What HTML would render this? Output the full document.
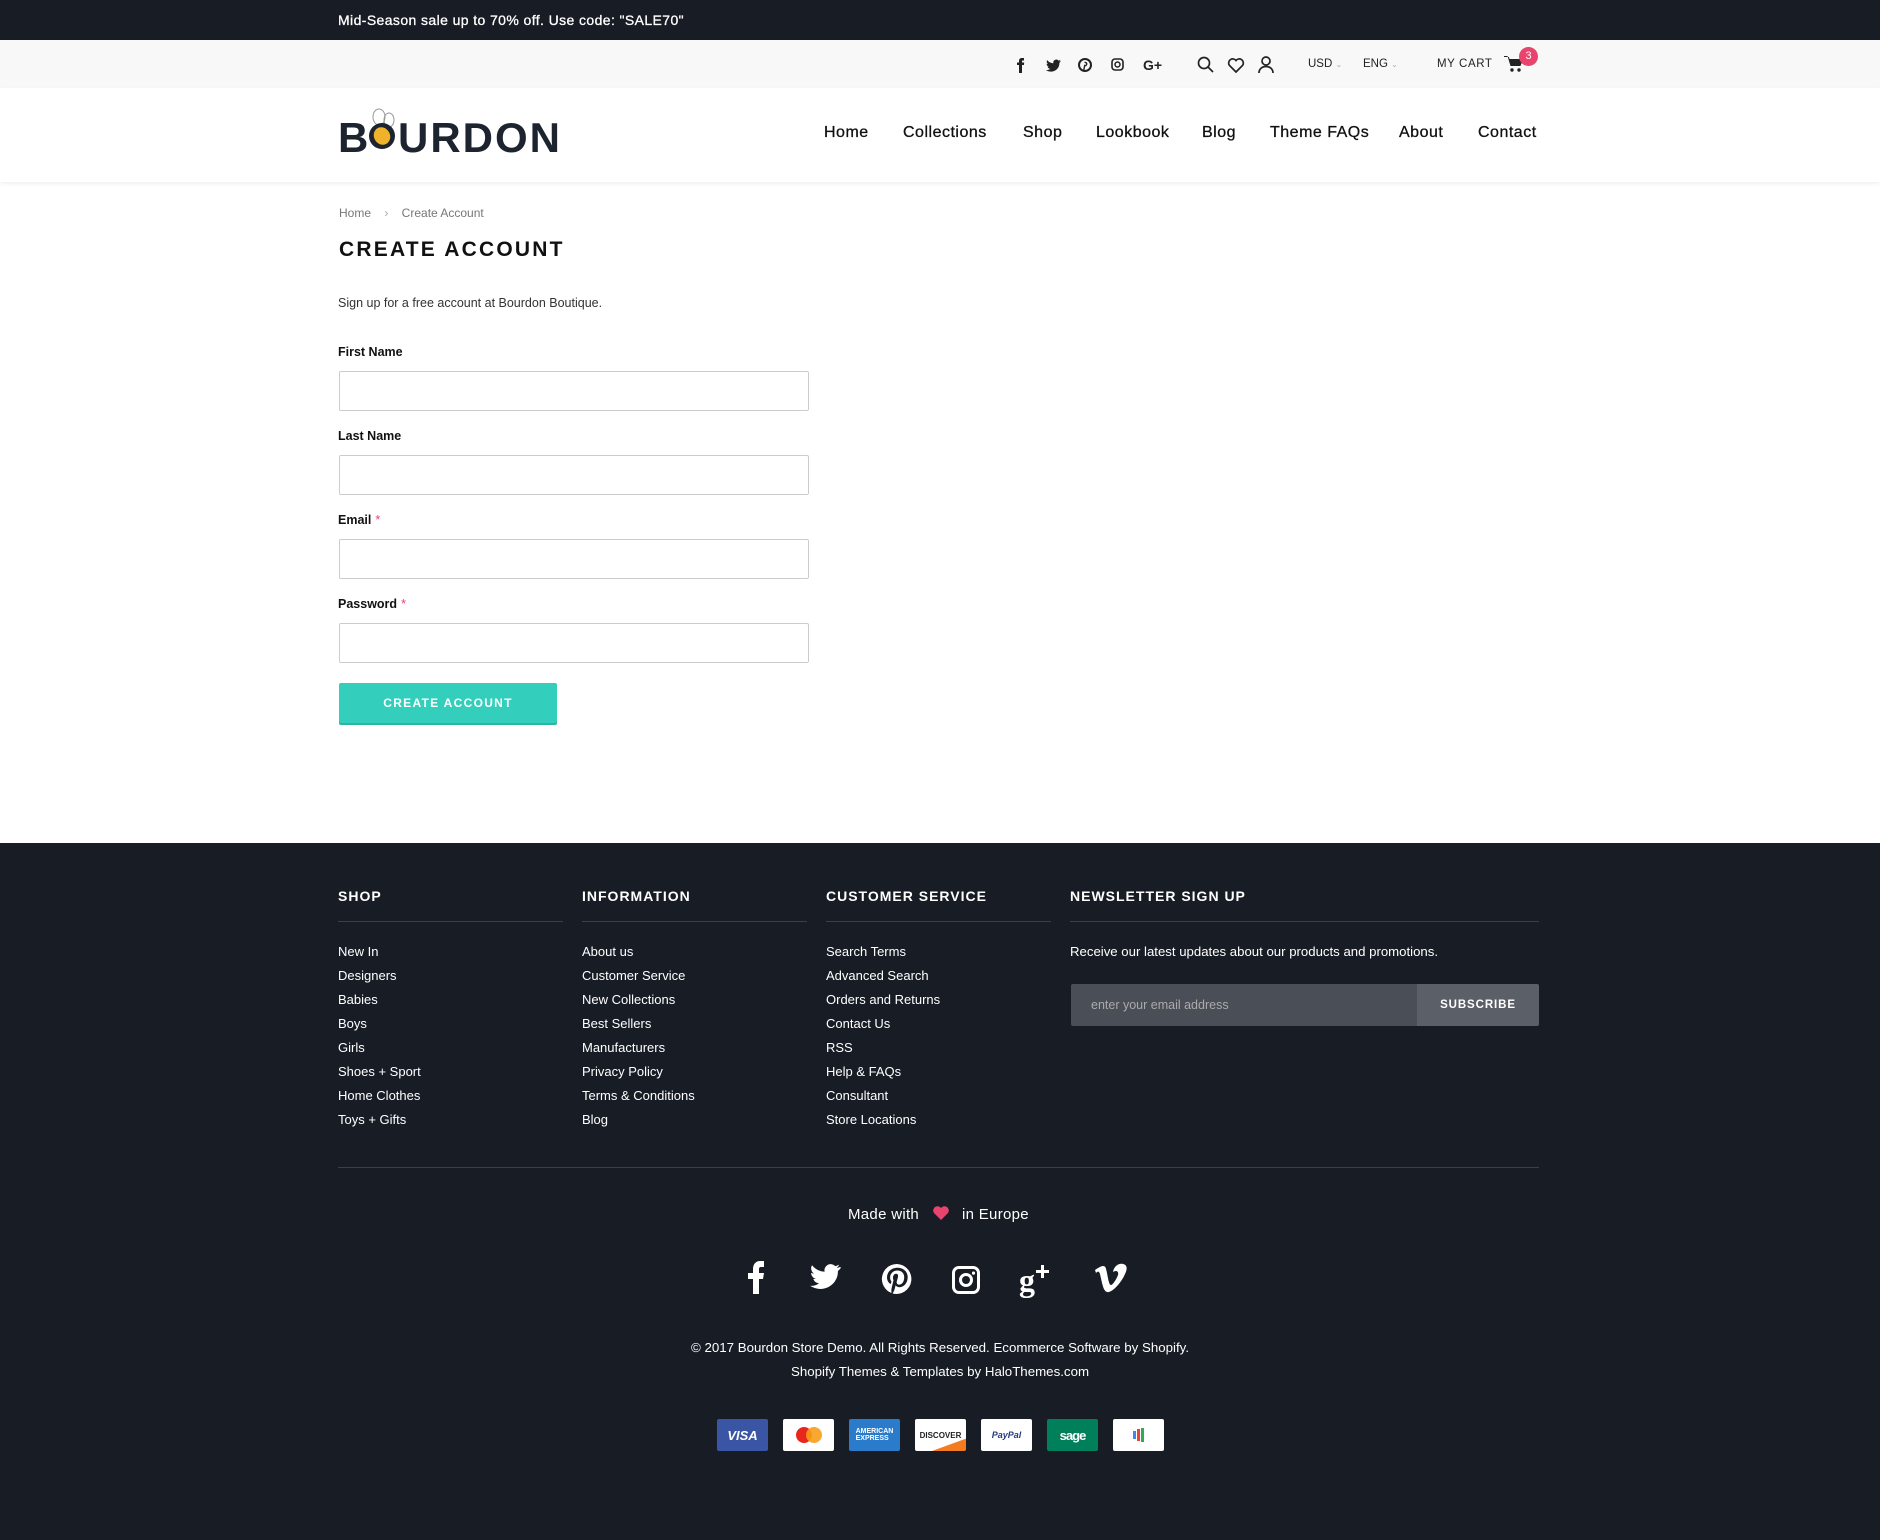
<!DOCTYPE html>
<html><head><meta charset="utf-8"><style>
*{margin:0;padding:0;box-sizing:border-box}
body{width:1880px;height:1540px;position:relative;font-family:"Liberation Sans",sans-serif;background:#fff;overflow:hidden;color:#111}
.a{position:absolute;white-space:nowrap}
.top{left:0;top:0;width:1880px;height:40px;background:#171c25}
.bar2{left:0;top:40px;width:1880px;height:48px;background:#f8f8f8}
.hdr{left:0;top:88px;width:1880px;height:94px;background:#fff;box-shadow:0 2px 4px rgba(0,0,0,.06)}
.nav{top:124px;font-size:16px;color:#111;letter-spacing:.5px;-webkit-text-stroke:.3px #111}
.lbl{left:338px;font-size:12.5px;font-weight:bold;color:#111}
.lbl i{color:#e8446d;font-style:normal;font-weight:normal;margin-left:4px}
.inp{left:339px;width:470px;height:40px;border:1px solid #ccc;border-radius:2px}
.foot{left:0;top:843px;width:1880px;height:697px;background:#171c25}
.fh{top:888px;font-size:14px;font-weight:bold;color:#fff;letter-spacing:1px}
.fl{height:1px;background:#3a404a;top:921px}
.lk{color:#fff;font-size:13px;line-height:24px}
.card{top:1419px;width:51px;height:32px;border-radius:2px;background:#fff;font-size:10px;font-weight:bold;display:flex;align-items:center;justify-content:center;font-style:italic}
</style></head><body>
<div class="a top"></div>
<div class="a" style="left:338px;top:12px;font-size:14px;color:#fff;letter-spacing:.4px;-webkit-text-stroke:.3px #fff">Mid-Season sale up to 70% off. Use code: "SALE70"</div>
<div class="a bar2"></div>
<svg class="a" style="left:1015px;top:56px" width="200" height="18" viewBox="0 0 200 18" fill="#222">
<path d="M4 17V9H2V6.5h2V5c0-2 1-3 3-3h2v2.5H7.8c-.6 0-.8.3-.8.8v1.2h2.2L8.9 9H7v8z"/>
<path d="M46 5c-.6.3-1.2.4-1.8.5.7-.4 1.1-1 1.4-1.7-.6.4-1.3.6-2 .8a3 3 0 0 0-5.2 2.7c-2.6-.1-4.8-1.3-6.3-3.2-.8 1.4-.3 3.1.9 4-.5 0-1-.2-1.4-.4 0 1.5 1 2.7 2.4 3-.4.1-.9.1-1.4 0 .4 1.2 1.5 2.1 2.8 2.1-1.3 1-2.9 1.5-4.6 1.3 6.6 4 13.900-.6 13.6-7.3.6-.4 1.1-1 1.6-1.8z"/>
<circle cx="70" cy="9" r="6" fill="none" stroke="#222" stroke-width="2"/><path d="M69.5 6.5c1.5-.3 2.5.6 2.2 1.8-.2 1-1.2 1.6-2 1.2L68.6 15" stroke="#222" stroke-width="1.4" fill="none"/>
<rect x="97" y="3" width="11" height="11" rx="3" fill="none" stroke="#222" stroke-width="1.6"/><circle cx="102.5" cy="8.5" r="2.5" fill="none" stroke="#222" stroke-width="1.5"/>
<text x="128" y="14" font-family="Liberation Sans" font-weight="bold" font-size="14">G+</text>
</svg>
<svg class="a" style="left:1196px;top:55px" width="80" height="20" viewBox="0 0 80 20" fill="none" stroke="#222" stroke-width="1.7">
<circle cx="8" cy="8" r="5.5"/><path d="M12 12l5 5"/>
<path d="M40 17l-6.5-6.5a3.8 3.8 0 0 1 6.5-5 3.8 3.8 0 0 1 6.5 5z"/>
<circle cx="70" cy="6" r="4"/><path d="M63 18c0-4 3-6.5 7-6.5s7 2.5 7 6.5"/>
</svg>
<div class="a" style="left:1308px;top:58px;font-size:11.5px;color:#222">USD <span style="color:#aaa;font-size:8px">&#8964;</span></div>
<div class="a" style="left:1363px;top:58px;font-size:11.5px;color:#222">ENG <span style="color:#aaa;font-size:8px">&#8964;</span></div>
<div class="a" style="left:1437px;top:58px;font-size:11.5px;color:#222;letter-spacing:.6px">MY CART</div>
<svg class="a" style="left:1504px;top:55px" width="20" height="18" viewBox="0 0 20 18" fill="#222"><path d="M0 1h3.5l3 10h10l2.5-7H5.5l-.6-2H0z"/><circle cx="8" cy="15" r="1.7"/><circle cx="15" cy="15" r="1.7"/></svg>
<div class="a" style="left:1519px;top:47px;width:19px;height:19px;border-radius:50%;background:#e8446d;color:#fff;font-size:11px;text-align:center;line-height:19px">3</div>
<div class="a hdr"></div>
<svg class="a" style="left:336px;top:108px" width="236" height="50" viewBox="0 0 236 50">
<ellipse cx="43" cy="9" rx="6" ry="8" fill="none" stroke="#999" stroke-width="1"/><ellipse cx="53" cy="12" rx="5" ry="7" fill="none" stroke="#999" stroke-width="1"/>
<text x="2" y="44" font-family="Liberation Sans" font-weight="bold" font-size="42" fill="#1d2430" letter-spacing="2">B</text>
<circle cx="46" cy="28" r="13" fill="#1d2430"/><ellipse cx="46" cy="28" rx="8" ry="9" fill="#f0b22a" transform="rotate(-30 46 28)"/>
<text x="62" y="44" font-family="Liberation Sans" font-weight="bold" font-size="42" fill="#1d2430" letter-spacing="2">URDON</text>
</svg>
<div class="a nav" style="left:824px">Home</div>
<div class="a nav" style="left:903px">Collections</div>
<div class="a nav" style="left:1023px">Shop</div>
<div class="a nav" style="left:1096px">Lookbook</div>
<div class="a nav" style="left:1202px">Blog</div>
<div class="a nav" style="left:1270px">Theme FAQs</div>
<div class="a nav" style="left:1399px">About</div>
<div class="a nav" style="left:1478px">Contact</div>

<div class="a" style="left:339px;top:206px;font-size:12px;color:#777">Home <span style="margin:0 10px;color:#aaa">›</span> Create Account</div>
<div class="a" style="left:339px;top:238px;font-size:21px;font-weight:bold;color:#111;letter-spacing:2.2px">CREATE ACCOUNT</div>
<div class="a" style="left:338px;top:296px;font-size:12.5px;color:#333">Sign up for a free account at Bourdon Boutique.</div>
<div class="a lbl" style="top:345px">First Name</div><div class="a inp" style="top:371px"></div>
<div class="a lbl" style="top:429px">Last Name</div><div class="a inp" style="top:455px"></div>
<div class="a lbl" style="top:513px">Email<i>*</i></div><div class="a inp" style="top:539px"></div>
<div class="a lbl" style="top:597px">Password<i>*</i></div><div class="a inp" style="top:623px"></div>
<div class="a" style="left:339px;top:683px;width:218px;height:40px;background:#33cfbc;border-radius:2px;color:#fff;font-size:12px;font-weight:bold;letter-spacing:1.3px;text-align:center;line-height:40px;box-shadow:0 2px 0 #2bb5a4">CREATE ACCOUNT</div>

<div class="a foot"></div>
<div class="a fh" style="left:338px">SHOP</div>
<div class="a fh" style="left:582px">INFORMATION</div>
<div class="a fh" style="left:826px">CUSTOMER SERVICE</div>
<div class="a fh" style="left:1070px">NEWSLETTER SIGN UP</div>
<div class="a fl" style="left:338px;width:225px"></div>
<div class="a fl" style="left:582px;width:225px"></div>
<div class="a fl" style="left:826px;width:225px"></div>
<div class="a fl" style="left:1070px;width:469px"></div>
<div class="a lk" style="left:338px;top:940px">New In<br>Designers<br>Babies<br>Boys<br>Girls<br>Shoes + Sport<br>Home Clothes<br>Toys + Gifts</div>
<div class="a lk" style="left:582px;top:940px">About us<br>Customer Service<br>New Collections<br>Best Sellers<br>Manufacturers<br>Privacy Policy<br>Terms &amp; Conditions<br>Blog</div>
<div class="a lk" style="left:826px;top:940px">Search Terms<br>Advanced Search<br>Orders and Returns<br>Contact Us<br>RSS<br>Help &amp; FAQs<br>Consultant<br>Store Locations</div>
<div class="a lk" style="left:1070px;top:940px;font-size:13.2px">Receive our latest updates about our products and promotions.</div>
<div class="a" style="left:1071px;top:984px;width:346px;height:42px;background:#4a4e57;border-radius:2px 0 0 2px;color:#aaa;font-size:12.5px;line-height:42px;padding-left:20px">enter your email address</div>
<div class="a" style="left:1417px;top:984px;width:122px;height:42px;background:#5b5f68;border-radius:0 2px 2px 0;color:#fff;font-size:11.5px;font-weight:bold;letter-spacing:.9px;line-height:42px;text-align:center">SUBSCRIBE</div>
<div class="a" style="left:338px;top:1167px;width:1201px;height:1px;background:#3a404a"></div>
<div class="a" style="left:848px;top:1205px;font-size:15px;color:#fff;letter-spacing:.3px">Made with <svg width="18" height="16" viewBox="0 0 18 16" style="margin:0 8px;vertical-align:-2px"><path d="M9 15L2 8a4 4 0 0 1 7-5 4 4 0 0 1 7 5z" fill="#e8446d"/></svg> in Europe</div>
<svg class="a" style="left:740px;top:1258px" width="400" height="40" viewBox="0 0 400 40" fill="#fff">
<path d="M13 36V21H8v-6h5v-4c0-5 3-8 7-8h4v6h-3c-1.3 0-2 .7-2 2v4h5l-1 6h-4v15z"/>
<path d="M100 9c-1.2.5-2.4.8-3.6 1 1.3-.8 2.3-2 2.8-3.4-1.2.7-2.6 1.2-4 1.5a6.2 6.2 0 0 0-10.6 5.6C79.5 13.5 75 11 72 7.200c-1.7 2.9-.8 6.5 1.9 8.3-1 0-2-.3-2.8-.8 0 3 2.1 5.6 5 6.1-.9.3-1.9.3-2.8.1.8 2.5 3.1 4.3 5.8 4.3-2.6 2-5.9 3-9.2 2.6 13.500 8.500 28.600-1.300 28-14.9 1.3-.9 2.3-2 3.1-3.3z"/>
<path d="M157 6a15 15 0 0 0-5.5 29c-.1-1.2-.2-3 0-4.4l2-8.3s-.5-1-.5-2.5c0-2.3 1.4-4 3-4 1.4 0 2.1 1 2.1 2.3 0 1.4-.9 3.5-1.4 5.500-.4 1.6.8 3 2.4 3 2.9 0 5.1-3 5.1-7.5 0-3.9-2.8-6.6-6.8-6.6-4.6 0-7.300 3.500-7.300 7 0 1.4.5 2.9 1.2 3.7.1.2.1.3.1.5l-.5 1.9c-.1.3-.3.4-.6.2-2-1-3.3-3.9-3.3-6.3 0-5.1 3.7-9.8 10.7-9.8 5.6 0 10 4 10 9.4 0 5.6-3.5 10.1-8.4 10.1-1.6 0-3.2-.9-3.7-1.9l-1 3.9c-.4 1.4-1.4 3.2-2 4.3A15 15 0 1 0 157 6z"/>
<path d="M219 8h14a7 7 0 0 1 7 7v14a7 7 0 0 1-7 7h-14a7 7 0 0 1-7-7V15a7 7 0 0 1 7-7zm0 3a4 4 0 0 0-4 4v14a4 4 0 0 0 4 4h14a4 4 0 0 0 4-4V15a4 4 0 0 0-4-4zm7 4a7 7 0 1 1 0 14 7 7 0 0 1 0-14zm0 3a4 4 0 1 0 0 8 4 4 0 0 0 0-8zm7.5-4.5a1.6 1.6 0 1 1 0 3.2 1.6 1.6 0 0 1 0-3.2z"/>
<text x="279" y="33" font-family="Liberation Serif" font-weight="bold" font-size="32">g</text>
<path d="M301 7h3v5h5v3h-5v5h-3v-5h-5v-3h5z"/>
<path d="M355 12c3-2 6-4 8-4 3 0 3 3 4 7 1 5 2 12 4 12s6-7 7-10c1-4-2-5-5-3 1-6 6-9 10-8 5 1 4 6 2 10-3 7-10 16-16 18-5 1-6-6-7-9l-2-9c-1-3-2-3-4-1z"/>
</svg>
<div class="a" style="left:0;width:1880px;text-align:center;top:1336px;font-size:13.3px;color:#fff;line-height:24px">© 2017 Bourdon Store Demo. All Rights Reserved. Ecommerce Software by Shopify.<br>Shopify Themes &amp; Templates by HaloThemes.com</div>
<div class="a card" style="left:717px;background:#3b55a5;color:#fff;font-size:13px">VISA</div>
<div class="a card" style="left:783px"><svg width="30" height="18"><circle cx="10" cy="9" r="8" fill="#e9261d"/><circle cx="20" cy="9" r="8" fill="#f79e1b" opacity=".9"/></svg></div>
<div class="a card" style="left:849px;background:#2a7ccb;color:#fff;font-size:7px;font-style:normal">AMERICAN<br>EXPRESS</div>
<div class="a card" style="left:915px;color:#222;font-size:8px;font-style:normal;background:linear-gradient(160deg,#fff 75%,#f47b20 76%)">DISCOVER</div>
<div class="a card" style="left:981px;color:#253b80;font-size:9px">PayPal</div>
<div class="a card" style="left:1047px;background:#00805a;color:#fff;font-size:13px;font-style:normal;letter-spacing:-1px">sage</div>
<div class="a card" style="left:1113px"><svg width="16" height="16"><rect x="2" y="4" width="3" height="8" fill="#4285f4"/><rect x="6" y="2" width="3" height="12" fill="#ea4335"/><rect x="10" y="1" width="3" height="14" fill="#34a853"/></svg></div>
</body></html>
